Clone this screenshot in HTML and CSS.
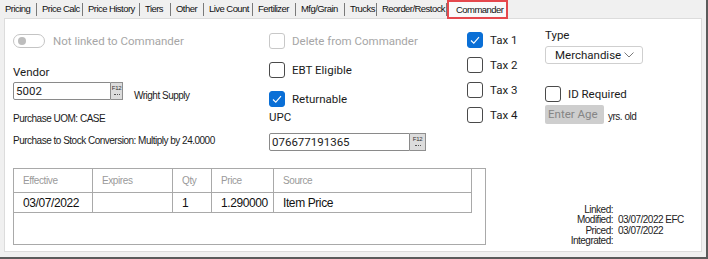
FILE: index.html
```html
<!DOCTYPE html>
<html lang="en">
<head>
    <meta charset="UTF-8">
    <title>Item - Commander</title>
    <link rel="stylesheet" href="styles.css">
</head>
<body>
    <div class="window">
        <nav class="tabs">
            <span class="tab">Pricing</span>
            <span class="tab">Price Calc</span>
            <span class="tab">Price History</span>
            <span class="tab">Tiers</span>
            <span class="tab">Other</span>
            <span class="tab">Live Count</span>
            <span class="tab">Fertilizer</span>
            <span class="tab">Mfg/Grain</span>
            <span class="tab">Trucks</span>
            <span class="tab">Reorder/Restock</span>
            <span class="tab tab-active">Commander</span>
        </nav>

        <main class="panel">
            <div class="fields">
                <section class="col col-vendor">
                    <div class="toggle-row">
                        <span class="toggle"><span class="knob"></span></span>
                        <span class="muted">Not linked to Commander</span>
                    </div>
                    <label class="label label-vendor">Vendor</label>
                    <div class="lookup">
                        <span class="input input-vendor">5002</span>
                        <span class="f12">F12<i></i></span>
                        <span class="small vendor-name">Wright Supply</span>
                    </div>
                    <p class="small uom">Purchase UOM: CASE</p>
                    <p class="small conversion">Purchase to Stock Conversion: Multiply by 24.0000</p>
                </section>

                <section class="col col-flags">
                    <div class="check-row first-flag">
                        <span class="box box-disabled"></span>
                        <span class="muted">Delete from Commander</span>
                    </div>
                    <div class="check-row flag">
                        <span class="box"></span>
                        <span>EBT Eligible</span>
                    </div>
                    <div class="check-row flag">
                        <span class="box box-checked">
                            <svg viewBox="0 0 16 16" width="16" height="16"><polyline points="4,8.5 6.8,11.2 12,5.2" fill="none" stroke="#fff" stroke-width="1.1"/></svg>
                        </span>
                        <span>Returnable</span>
                    </div>
                    <label class="label label-upc">UPC</label>
                    <div class="lookup lookup-upc">
                        <span class="input input-upc">076677191365</span>
                        <span class="f12 f12-wide">F12<i></i></span>
                    </div>
                </section>

                <section class="col col-tax">
                    <div class="check-row tax first-tax">
                        <span class="box box-checked">
                            <svg viewBox="0 0 16 16" width="16" height="16"><polyline points="4,8.5 6.8,11.2 12,5.2" fill="none" stroke="#fff" stroke-width="1.1"/></svg>
                        </span>
                        <span>Tax 1</span>
                    </div>
                    <div class="check-row tax">
                        <span class="box"></span>
                        <span>Tax 2</span>
                    </div>
                    <div class="check-row tax">
                        <span class="box"></span>
                        <span>Tax 3</span>
                    </div>
                    <div class="check-row tax">
                        <span class="box"></span>
                        <span>Tax 4</span>
                    </div>
                </section>

                <section class="col col-type">
                    <label class="label">Type</label>
                    <div class="select">
                        <span>Merchandise</span>
                        <svg viewBox="0 0 10 6" width="10" height="6"><polyline points="0.5,0.5 5,5 9.5,0.5" fill="none" stroke="#7a7a7a" stroke-width="1"/></svg>
                    </div>
                    <div class="check-row id-row">
                        <span class="box"></span>
                        <span>ID Required</span>
                    </div>
                    <div class="age-row">
                        <span class="age-input">Enter Age</span>
                        <span class="small">yrs. old</span>
                    </div>
                </section>
            </div>

            <div class="bottom">
                <div class="grid-box">
                    <table class="history">
                        <colgroup>
                            <col class="c-eff">
                            <col class="c-exp">
                            <col class="c-qty">
                            <col class="c-price">
                            <col class="c-src">
                        </colgroup>
                        <thead>
                            <tr>
                                <th>Effective</th>
                                <th>Expires</th>
                                <th>Qty</th>
                                <th>Price</th>
                                <th>Source</th>
                            </tr>
                        </thead>
                        <tbody>
                            <tr>
                                <td>03/07/2022</td>
                                <td></td>
                                <td>1</td>
                                <td>1.290000</td>
                                <td>Item Price</td>
                            </tr>
                        </tbody>
                    </table>
                </div>

                <dl class="meta">
                    <dt>Linked:</dt><dd></dd>
                    <dt>Modified:</dt><dd>03/07/2022 EFC</dd>
                    <dt>Priced:</dt><dd>03/07/2022</dd>
                    <dt>Integrated:</dt><dd></dd>
                </dl>
            </div>
        </main>
    </div>
</body>
</html>
```

FILE: styles.css
```css
:root {
    --ui-font: Roboto, "Noto Sans", sans-serif;
    --small-font: "Liberation Sans", Arial, sans-serif;
    --text-color: #1b1b1b;
    --muted-color: #a6a6a6;
    --line-color: #a9a9a9;
    --accent-color: #0a6fd6;
}

body {
    margin: 0;
    font-family: var(--ui-font);
    font-size: 11.5px;
    color: var(--text-color);
}

.window {
    width: 706px;
    height: 257px;
    border-right: 2px solid #5b5b5b;
    border-bottom: 2px solid #5b5b5b;
    background: #f0f0f0;
    display: flex;
    flex-direction: column;
}

/* tab strip */
.tabs {
    height: 18px;
    display: grid;
    grid-template-columns: 37px 46px 57px 31px 33px 49px 43px 49px 32px 70px 61px;
    font-family: var(--small-font);
    font-size: 9.5px;
    letter-spacing: -0.55px;
    color: #111;
}

.tab {
    margin: 3px 0;
    padding-left: 5px;
    line-height: 12px;
    border-right: 1px solid #7a7a7a;
    white-space: nowrap;
}

.tab-active {
    margin: 0;
    height: 19px;
    box-sizing: border-box;
    padding-left: 7px;
    line-height: 15px;
    border: 2px solid #e5484d;
    background: #fafafa;
    position: relative;
    z-index: 1;
}

/* main panel */
.panel {
    flex: 1;
    margin: 0 4px 5px;
    padding: 8px 8px 0;
    background: #fff;
    border: 1px solid #dcdcdc;
}

.fields {
    display: flex;
}

.col {
    display: flex;
    flex-direction: column;
    align-items: flex-start;
}

.col-vendor { width: 256px; }
.col-flags { width: 198px; }
.col-tax { width: 78px; }

.muted {
    color: var(--muted-color);
}

.label {
    display: block;
    line-height: 16px;
}

.small {
    font-family: var(--small-font);
    font-size: 10px;
    letter-spacing: -0.5px;
    line-height: 12px;
    margin: 0;
}

/* toggle */
.toggle-row {
    margin-top: 7px;
    display: flex;
    align-items: center;
    gap: 8px;
    height: 14px;
}

.toggle {
    width: 32px;
    height: 14px;
    box-sizing: border-box;
    border: 1px solid #c4c4c4;
    border-radius: 7px;
    display: flex;
    align-items: center;
    padding-left: 4px;
}

.knob {
    width: 8px;
    height: 8px;
    border-radius: 50%;
    background: #bdbdbd;
}

/* inputs */
.label-vendor {
    margin-top: 16px;
}

.lookup {
    display: flex;
    align-items: flex-end;
    margin-top: 2px;
}

.input {
    box-sizing: border-box;
    height: 18px;
    border: 1px solid #8a8a8a;
    border-radius: 2px 0 0 2px;
    padding: 0 2px;
    line-height: 16px;
}

.input-vendor { width: 98px; }
.input-upc { width: 141px; }

.f12 {
    box-sizing: border-box;
    width: 12px;
    height: 18px;
    border: 1px solid #8f8f8f;
    border-left: none;
    background: #dcdcdc;
    font-family: var(--small-font);
    font-size: 6px;
    letter-spacing: -0.3px;
    line-height: 8px;
    text-align: center;
    padding-top: 1px;
    color: #333;
}

.f12 i {
    display: block;
    margin: 2px auto 0;
    width: 6px;
    border-top: 1px dotted #555;
}

.f12-wide {
    width: 16px;
}

.vendor-name {
    margin-left: 11px;
    margin-bottom: -2px;
}

.uom { margin-top: 13px; }
.conversion { margin-top: 10px; }

/* checkboxes */
.check-row {
    display: flex;
    align-items: center;
    gap: 7px;
    height: 16px;
}

.box {
    box-sizing: border-box;
    width: 16px;
    height: 16px;
    border: 1px solid #4a4a4a;
    border-radius: 3px;
    background: #fff;
    flex: none;
}

.box-disabled {
    border-color: #c8c8c8;
}

.box-checked {
    border-color: var(--accent-color);
    background: var(--accent-color);
}

.box-checked svg {
    display: block;
    margin: -1px;
}

.first-flag { margin-top: 6px; }
.flag { margin-top: 13px; }

.label-upc {
    margin-top: 2px;
}

.lookup-upc {
    margin-top: 8px;
}

.first-tax { margin-top: 5px; }
.tax + .tax { margin-top: 9px; }

/* type column */
.select {
    margin-top: 3px;
    box-sizing: border-box;
    width: 98px;
    height: 18px;
    border: 1px solid #cfcfcf;
    border-radius: 3px;
    display: flex;
    align-items: center;
    justify-content: space-between;
    padding: 0 8px 0 9px;
}

.id-row {
    margin-top: 22px;
}

.age-row {
    margin-top: 3px;
    display: flex;
    align-items: flex-end;
    gap: 4px;
}

.age-input {
    box-sizing: border-box;
    width: 59px;
    height: 19px;
    padding-left: 3px;
    line-height: 19px;
    background: #cecece;
    border-radius: 2px;
    color: #858585;
}

.age-row .small {
    margin-bottom: 1px;
}

/* price history grid */
.bottom {
    margin-top: 17px;
    display: flex;
}

.grid-box {
    box-sizing: border-box;
    width: 473px;
    height: 77px;
    border: 1px solid var(--line-color);
}

.history {
    table-layout: fixed;
    width: 458px;
    border-collapse: separate;
    border-spacing: 0;
}

.c-eff { width: 79px; }
.c-exp { width: 80px; }
.c-qty { width: 39px; }
.c-price { width: 62px; }
.c-src { width: 198px; }

.history th,
.history td {
    border-right: 1px solid var(--line-color);
    border-bottom: 1px solid var(--line-color);
    padding: 0 0 0 9px;
    text-align: left;
    white-space: nowrap;
}

.history th {
    height: 23px;
    font-family: var(--small-font);
    font-size: 10px;
    letter-spacing: -0.4px;
    font-weight: normal;
    color: #9a9a9a;
}

.history td {
    height: 19px;
    font-family: var(--small-font);
    font-size: 12px;
    letter-spacing: -0.4px;
    color: #111;
}

/* footer stamps */
.meta {
    align-self: flex-end;
    margin: 0 0 -2px 82px;
    display: grid;
    grid-template-columns: 45px auto;
    column-gap: 5px;
    font-family: var(--small-font);
    font-size: 10px;
    letter-spacing: -0.5px;
    line-height: 10.6px;
    color: #222;
}

.meta dt {
    text-align: right;
}

.meta dd {
    margin: 0;
    min-height: 10.6px;
}
```
